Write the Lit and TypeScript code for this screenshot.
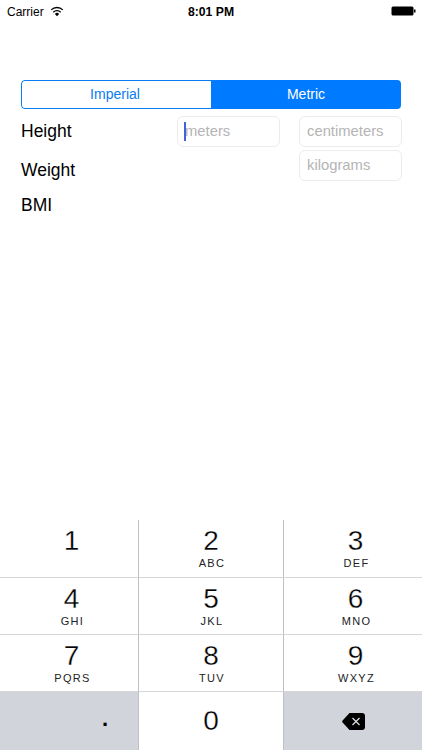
import { LitElement, html, css } from "lit";
import { customElement } from "lit/decorators.js";

const KEYS: [string, string][] = [
  ["1", ""], ["2", "ABC"], ["3", "DEF"],
  ["4", "GHI"], ["5", "JKL"], ["6", "MNO"],
  ["7", "PQRS"], ["8", "TUV"], ["9", "WXYZ"],
];

@customElement("app-root")
export class AppRoot extends LitElement {
  static styles = css`
    :host {
      display: flex;
      flex-direction: column;
      width: 422px;
      height: 750px;
      background: #fff;
      color: #000;
      font-family: "Liberation Sans", Arial, sans-serif;
      overflow: hidden;
    }
    .status {
      height: 20px;
      flex: none;
      display: grid;
      grid-template-columns: 1fr auto 1fr;
      align-items: center;
      padding: 0 6px 0 7px;
      font-size: 12px;
      line-height: 20px;
    }
    .left { display: flex; align-items: center; gap: 6px; }
    .status-text { padding-top: 2px; }
    .time { font-weight: 700; font-size: 12.2px; margin-left: -1px; }
    .right { justify-self: end; display: flex; align-items: center; }
    .form {
      flex: 1;
      padding: 60px 20px 0 21px;
      display: flex;
      flex-direction: column;
    }
    .segment {
      display: grid;
      grid-template-columns: 190px 1fr;
      height: 29px;
      margin-right: 1px;
      border-radius: 4px;
      overflow: hidden;
      font-size: 14px;
      line-height: 29px;
      text-align: center;
    }
    .imperial {
      border: 1.5px solid #0a7cf6;
      border-right: none;
      border-radius: 4px 0 0 4px;
      color: #0a7cf0;
      line-height: 26px;
      padding-right: 3px;
    }
    .metric { background: #007aff; color: #fff; }
    .stack { font-size: 17.5px; margin-top: 7px; }
    .label { line-height: 31px; }
    .field {
      box-sizing: border-box;
      width: 103px;
      height: 31px;
      border: 1px solid #ececec;
      border-radius: 6px;
      padding-left: 7px;
      font-size: 14.8px;
      line-height: 29px;
      color: #b4b4b4;
      position: relative;
    }
    .cm { margin-left: 19px; }
    .row1 { display: flex; height: 31px; }
    .row1 .label { width: 156px; }
    .row2 {
      display: flex;
      justify-content: space-between;
      margin-top: 3px;
      height: 31px;
    }
    .row2 .label { padding-top: 5px; }
    .row3 { margin-top: 9px; line-height: 31px; }
    .caret {
      position: absolute;
      left: 6px;
      top: 5px;
      width: 2px;
      height: 19px;
      background: #4263d8;
    }
    .pad {
      flex: none;
      display: grid;
      grid-template-columns: 139px 145px 138px;
      grid-template-rows: 58px 57px 57px 58px;
    }
    .key {
      box-sizing: border-box;
      display: flex;
      flex-direction: column;
      align-items: center;
      border-bottom: 1px solid #d6d6d9;
      border-right: 1px solid #c0c0c4;
      padding-top: 4px;
      background: #fff;
    }
    .key:nth-child(3n + 1) { padding-left: 5px; }
    .key:nth-child(3n) { border-right: none; padding-left: 5px; }
    .key:nth-last-child(-n + 3) { border-bottom: none; }
    .num {
      font-size: 28px;
      line-height: 34px;
      color: #000;
      -webkit-text-stroke: 0.3px #fff;
    }
    .sub {
      font-size: 11px;
      line-height: 13px;
      letter-spacing: 1.3px;
      color: #222;
      margin-top: -1px;
      padding-left: 2px;
    }
    .gray { background: #d1d4da; }
    .key.dot {
      align-items: flex-end;
      padding: 0 30px 4px 0;
      justify-content: center;
      font-size: 22px;
      font-weight: 700;
      line-height: 30px;
    }
    .key.zero { justify-content: center; padding: 0; }
    .key.del { justify-content: center; padding: 1px 0 0; }
  `;

  render() {
    return html`
      <div class="status">
        <div class="left">
          <span class="status-text">Carrier</span>
          <svg width="14" height="11" viewBox="0 0 14 11" aria-hidden="true">
            <path d="M7 10.2 4.9 7.9a3 3 0 0 1 4.2 0Z" fill="#000" />
            <path d="M3.3 6.2a5.2 5.2 0 0 1 7.4 0" fill="none" stroke="#000" stroke-width="1.3" />
            <path d="M1.2 3.9a8.2 8.2 0 0 1 11.6 0" fill="none" stroke="#000" stroke-width="1.3" />
          </svg>
        </div>
        <span class="time status-text">8:01 PM</span>
        <div class="right">
          <svg width="25" height="10" viewBox="0 0 25 10" aria-hidden="true">
            <rect x="0.5" y="0.5" width="22" height="9" rx="1.5" fill="#000" />
            <rect x="23" y="3.5" width="1.5" height="3" fill="#000" />
          </svg>
        </div>
      </div>
      <div class="form">
        <div class="segment">
          <div class="imperial">Imperial</div>
          <div class="metric">Metric</div>
        </div>
        <div class="stack">
          <div class="row1">
            <div class="label">Height</div>
            <div class="field"><span class="caret"></span>meters</div>
            <div class="field cm">centimeters</div>
          </div>
          <div class="row2">
            <div class="label">Weight</div>
            <div class="field">kilograms</div>
          </div>
          <div class="row3">BMI</div>
        </div>
      </div>
      <div class="pad">
        ${KEYS.map(
          ([n, s]) => html`<div class="key">
            <span class="num">${n}</span>
            ${s ? html`<span class="sub">${s}</span>` : ""}
          </div>`
        )}
        <div class="key gray dot">.</div>
        <div class="key zero"><span class="num">0</span></div>
        <div class="key gray del">
          <svg width="23" height="17" viewBox="0 0 23 17" aria-hidden="true">
            <path d="M7.5 0H20a3 3 0 0 1 3 3v11a3 3 0 0 1-3 3H7.5L.6 9.5a1.5 1.5 0 0 1 0-2Z" fill="#000" />
            <path d="M10.5 5l7 7M17.5 5l-7 7" stroke="#dfe1e6" stroke-width="1.2" fill="none" />
          </svg>
        </div>
      </div>
    `;
  }
}
